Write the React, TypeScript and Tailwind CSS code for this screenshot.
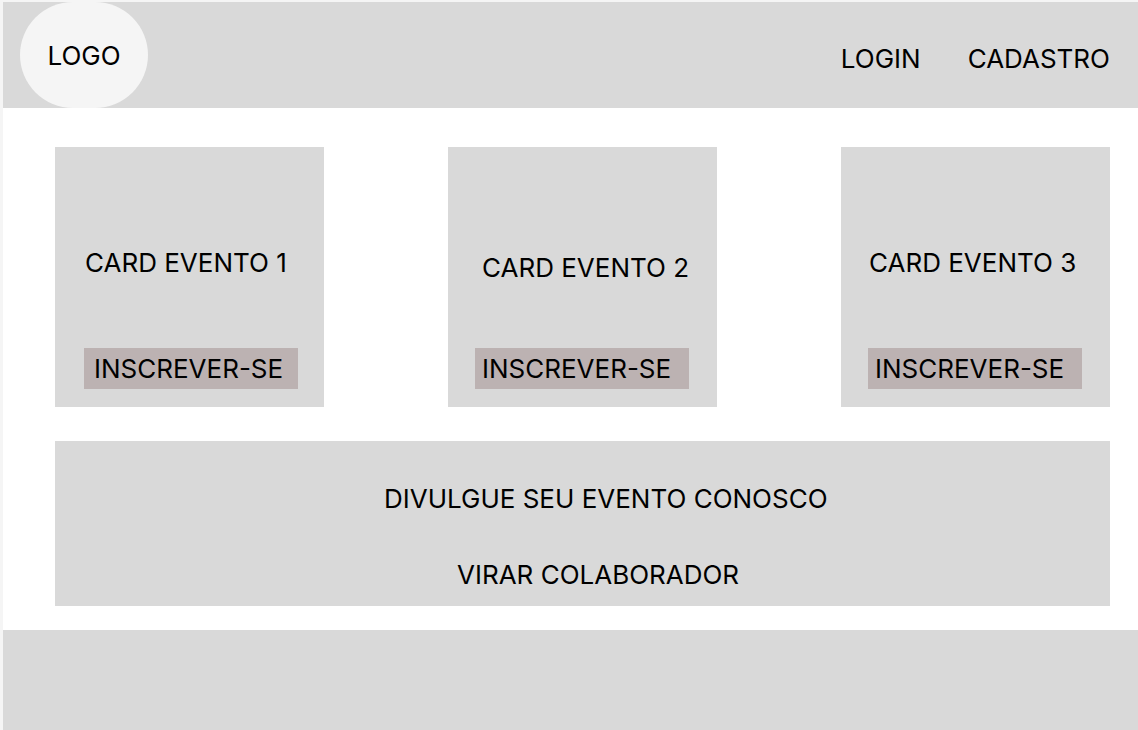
import React from "react";

const cards = [
  { title: "CARD EVENTO 1", titleCls: "mt-[100px] ml-[30px]", btnCls: "mt-[70px] ml-[29px] pl-[10px]" },
  { title: "CARD EVENTO 2", titleCls: "mt-[105px] ml-[34px]", btnCls: "mt-[65px] ml-[27px] pl-[7px]" },
  { title: "CARD EVENTO 3", titleCls: "mt-[100px] ml-[28px]", btnCls: "mt-[70px] ml-[27px] pl-[7px]" },
];

export default function App() {
  return (
    <div
      className="w-[1138px] h-[730px] bg-[#f5f5f5] pl-[3px] pt-[2px] flex flex-col text-black text-[26px] leading-[31px] overflow-hidden"
      style={{ fontFamily: "Inter, 'Liberation Sans', sans-serif" }}
    >
      <header className="h-[106px] shrink-0 bg-[#d9d9d9] flex items-center">
        <div className="ml-[17px] w-[128px] h-[106px] rounded-full bg-[#f5f5f5] flex items-center justify-center pt-[1px]">
          LOGO
        </div>
        <nav className="ml-auto mr-[28px] flex gap-[47px] pt-[6px]">
          <span>LOGIN</span>
          <span>CADASTRO</span>
        </nav>
      </header>
      <main className="bg-white h-[522px] shrink-0 pl-[52px] pr-[28px] pt-[39px] flex flex-col">
        <div className="flex justify-between">
          {cards.map((c) => (
            <div key={c.title} className="w-[269px] h-[260px] bg-[#d9d9d9] flex flex-col items-start">
              <div className={c.titleCls}>{c.title}</div>
              <div className={"w-[214px] h-[41px] bg-[#bcb2b2] flex items-center " + c.btnCls}>INSCREVER-SE</div>
            </div>
          ))}
        </div>
        <div className="mt-[34px] h-[165px] bg-[#d9d9d9] flex flex-col items-start">
          <div className="mt-[42px] ml-[329px]">DIVULGUE SEU EVENTO CONOSCO</div>
          <div className="mt-[45px] ml-[402px]">VIRAR COLABORADOR</div>
        </div>
      </main>
      <footer className="flex-1 bg-[#d9d9d9]"></footer>
    </div>
  );
}
